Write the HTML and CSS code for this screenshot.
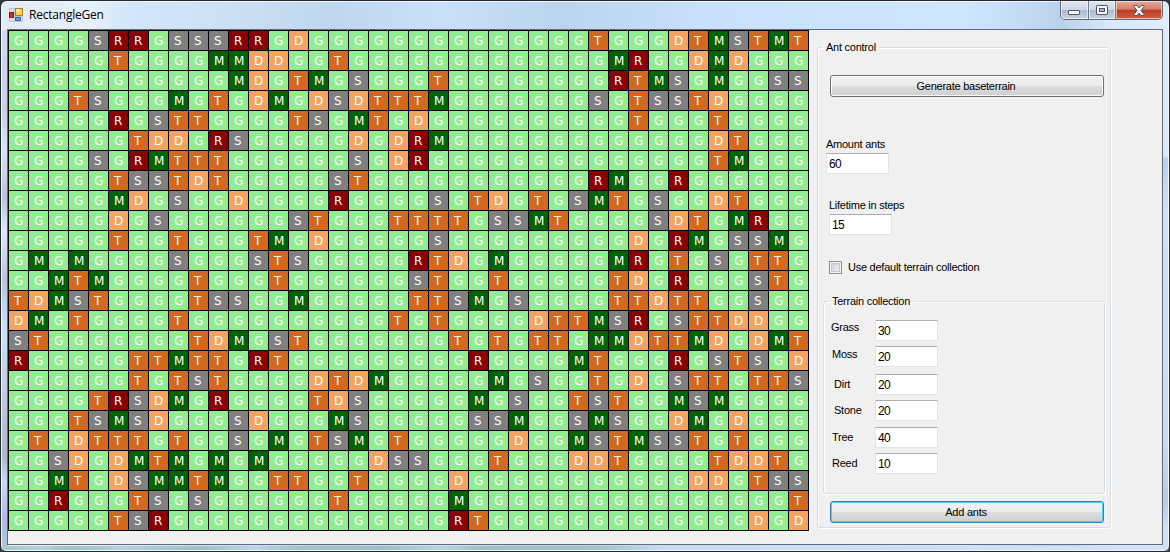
FILE: index.html
```html
<!DOCTYPE html>
<html lang="en">
<head>
<meta charset="utf-8">
<title>RectangleGen</title>
<link rel="stylesheet" href="styles.css">
</head>
<body>
<div class="window">
  <header class="titlebar">
    <svg class="app-icon" width="15" height="14" viewBox="0 0 15 14">
      <rect x="0" y="0" width="14" height="14" fill="#c3c6cc"/>
      <rect x="1" y="1" width="4" height="3" fill="#dfe1e5"/>
      <rect x="1" y="10" width="4" height="3" fill="#dfe1e5"/>
      <rect x="12" y="9" width="1" height="4" fill="#eceef1"/>
      <rect x="0.5" y="4.500" width="4" height="5" fill="#c62d1e" stroke="#8d1d14"/>
      <rect x="6.500" y="0.500" width="7" height="7" fill="#f8cf4c" stroke="#ad8420"/>
      <rect x="7" y="1" width="4" height="3" fill="#ffe793"/>
      <rect x="6.500" y="9.500" width="5" height="3" fill="#6e9cf0" stroke="#3a67c2"/>
    </svg>
    <h1 class="title">RectangleGen</h1>
    <div class="controls">
      <span class="control min">
        <svg width="13" height="6" viewBox="0 0 13 6"><rect x=".5" y=".5" width="11" height="4" rx=".5" fill="#fff" stroke="#53576a"/></svg>
      </span>
      <span class="control max">
        <svg width="12" height="10" viewBox="0 0 12 10"><rect x=".5" y=".5" width="11" height="9" rx=".5" fill="#fff" stroke="#53576a"/><rect x="3.500" y="3.500" width="5" height="3" fill="#a9b8cd" stroke="#53576a"/></svg>
      </span>
      <span class="control close">
        <svg width="12" height="11" viewBox="0 0 12 11"><path d="M1 .5H4L6 3 8 .5H11V1.500L8 5.500 11 9.500V10.500H8L6 8 4 10.500H1V9.500L4 5.500 1 1.500Z" fill="#fff" stroke="#53576a"/></svg>
      </span>
    </div>
  </header>
  <main class="client">
    <div class="terrain" id="terrain"></div>
    <fieldset class="group ant">
      <legend>Ant control</legend>
      <button class="btn generate"><span>Generate baseterrain</span></button>
      <label class="field amount"><span>Amount ants</span><input class="box" value="60"></label>
      <label class="field lifetime"><span>Lifetime in steps</span><input class="box" value="15"></label>
      <label class="check"><i class="tick"></i><span>Use default terrain collection</span></label>
      <fieldset class="group collection">
        <legend>Terrain collection</legend>
        <label class="row grass"><span>Grass</span><input class="box" value="30"></label>
        <label class="row moss"><span>Moss</span><input class="box" value="20"></label>
        <label class="row dirt"><span>Dirt</span><input class="box" value="20"></label>
        <label class="row stone"><span>Stone</span><input class="box" value="20"></label>
        <label class="row tree"><span>Tree</span><input class="box" value="40"></label>
        <label class="row reed"><span>Reed</span><input class="box" value="10"></label>
      </fieldset>
      <button class="btn add"><span>Add ants</span></button>
    </fieldset>
  </main>
</div>
<script src="terrain.js"></script>
</body>
</html>
```
FILE: terrain.js
```js
// One string per grid row, one letter per terrain cell.
const rows = [
  "GGGGSRRGSSSRR" + "GDGGGGGGGGGGGG" + "GGTGGGDTMSTMT",
  "GGGGGTGGGGMMD" + "DGGTGGGGGGGGGG" + "GGGMRGGDMDGGG",
  "GGGGGGGGGGGMD" + "GTMGSGGGTGGGGG" + "GGGRTMSGMGGSS",
  "GGGTSGGGMGTGD" + "MGDSDTTTMGGGGG" + "GGSGTSSTDGGGG",
  "GGGGGRGSTTGGG" + "GTSGMTGDGGGGGG" + "GGGGTGGGTGGGG",
  "GGGGGGTDDGRSG" + "GGGGDGDRMGGGGG" + "GGGGGGGGDTGGG",
  "GGGGSGRMTTTGG" + "GGGGSGDRGGGGGG" + "GGGGGGGGTMGGG",
  "GGGGGTSSTDTGG" + "GGGSTGGGGGGGGG" + "GGRMGGRGGGGGG",
  "GGGGGMDGSGGDG" + "GGGRGGGGSGTDGT" + "GSMTGSGGDTGGG",
  "GGGGGDGSGGGGG" + "GSTGGGTTTTGSSM" + "TGGGGSDTGMRGG",
  "GGGGGTGGTGGGT" + "MGDGGGGGSGGGGG" + "GGGGDGRMGSSMG",
  "GMGMGGGGSGGGS" + "TSGGGGGRTDGMGG" + "GGGMRGTGSGTTG",
  "GGMTMGGGGTGGG" + "TGGGGGGSTGGTGG" + "GGGTDGRGGGSTG",
  "TDMSTGGGGTSSG" + "GMGGGGGTTSMGSG" + "GGGTTDTTGGSGG",
  "DMGTGGGGTGGGG" + "GGGGGGTGTGGGGD" + "TTMSRGSTTDDGG",
  "STGGGGGGGTDMG" + "STGGGGGGGTGTGT" + "TGMMDTTMDGDMT",
  "RGGGGGTTMTTGR" + "TGGGGGGGGGRGGG" + "GMTGGGRGSTSGD",
  "GGGGGGTGTSTGG" + "GGDTDMGGGGGMGS" + "GGTGDGSTTGTTS",
  "GGGGTRSDMGRGG" + "GGTDSGGGGGMGSG" + "GTSTGGMSMGGGG",
  "GGGTSMSDGGGSD" + "GGGMSGGGGGSSMG" + "GSMSGGDMGDGGG",
  "GTGDTTTGTGGSG" + "MGTSMGTGGGGGDG" + "GMSTMSSTGTGGG",
  "GGSDGDMTMGMGM" + "GGGGGDSSGGGTGG" + "GDDTGGGGTDDTG",
  "GGMTGDSMMTMGG" + "TTGGTGGGGDGGGG" + "GGGGGGGDDGTSS",
  "GGRGGGTSGSGGG" + "GGGTGGGGGMGGGG" + "GGGGGGGGGGGGT",
  "GGGGGTSRGGGGG" + "GGGGGGGGGRTGGG" + "GGGGGGGGGGDGD"
];
document.getElementById("terrain").innerHTML = rows.map(function (row) {
  return row.split("").map(function (c) {
    return '<span class="cell ' + c.toLowerCase() + '">' + c + "</span>";
  }).join("");
}).join("");
```
FILE: styles.css
```css
* { box-sizing: border-box; }
body {
  margin: 0;
  background: #303a40;
  font: 11px/14px "Liberation Sans", Arial, sans-serif;
  letter-spacing: -0.25px;
  color: #000;
  overflow: hidden;
}
.window {
  width: 1170px;
  height: 552px;
  padding: 0 6px 6px;
  border: 1px solid #25282d;
  border-radius: 7px 7px 6px 6px;
  box-shadow: inset 0 0 0 1px #eef6ff;
  background:
    linear-gradient(90deg, #a5c9c9 0, #b4d3da 40px, #9cc2c3 70px, #b4d1e2 120px, #9dc0c6 200px, #bcd6ef 255px, #a2c6cb 290px, #9bc0c4 380px, #b9d6e8 440px, #9dc2c6 480px, #a1c5ca 600px, #c4dcf6 660px, #cfe3fb 1170px) 0 545px / 100% 5px no-repeat,
    linear-gradient(180deg, transparent 28px, #cbdcf3 30px, #c4d2e6 110px, #d6e5f8 150px, #b6c5d9 196px, #dbe9fb 230px, #b5c6dc 278px, #cfe1f7 330px, #a9b8ca 455px, #c5dbf4 480px, #aeb9e8 518px, #b3cbd4 552px) 0 0 / 7px 100% no-repeat,
    linear-gradient(180deg, transparent 28px, #d9e9fb 30px, #dceafb 155px, #b3cff0 158px, #cce2fb 210px, #c5dcf7 440px, #b6cbe6 500px, #cfe4fb 530px) right 0 / 6px 100% no-repeat,
    linear-gradient(90deg, #e2eaf5 0, #e7f1f9 90px, #d4e6f9 125px, #cbdff4 240px, #bfd7ee 330px, #c9e0f8 440px, #bad5ee 560px, #c8e0fa 700px, #d0e6ff 960px, #c4dbf3 1020px, #b9d2ea 1060px, #d8e9fb 1110px, #dfecfb 1170px);
}
.titlebar {
  height: 28px;
  display: flex;
  align-items: flex-start;
  padding-left: 2px;
}
.app-icon { margin-top: 7px; }
.title {
  flex: 1;
  margin: 5px 0 0 5px;
  font: 12px/17px "Open Sans", "Noto Sans", sans-serif;
  letter-spacing: -0.22px;
}
.controls {
  display: flex;
  width: 103px;
  height: 19px;
  border: 1px solid #646c7a;
  border-top: 0;
  border-radius: 0 0 5px 5px;
  overflow: hidden;
}
.control {
  display: flex;
  justify-content: center;
  align-items: center;
  background: linear-gradient(#dce5ef 0, #ccd7e4 48%, #a9b8cb 50%, #c5d5e8 100%);
  box-shadow: inset 0 0 0 1px rgba(255, 255, 255, .55);
}
.min { width: 28px; border-right: 1px solid #717b8b; padding-top: 5px; }
.max { width: 27px; border-right: 1px solid #717b8b; }
.close { flex: 1; background: linear-gradient(#e5a99b 0, #d67d6a 46%, #b93b22 50%, #d0604b 100%); }
.client {
  height: 516px;
  width: 1156px;
  display: flex;
  align-items: flex-start;
  background: #f0f0f0;
  border: 1px solid #626b77;
}
.terrain {
  width: 801px;
  height: 501px;
  flex: none;
  display: grid;
  grid-template-columns: repeat(40, 19px);
  grid-auto-rows: 19px;
  gap: 1px;
  padding: 1px;
  background: #000;
  font: 12px/19px "DejaVu Sans", Verdana, sans-serif;
  letter-spacing: 0;
  color: #fff;
}
.cell { padding-left: 5px; padding-top: 1px; height: 19px; overflow: hidden; }
.g { background: #90ee90; }
.s { background: #808080; }
.r { background: #8b0000; }
.t { background: #d2691e; }
.m { background: #006400; }
.d { background: #f4a460; }
.group {
  min-width: 0;
  margin: 0;
  padding: 0;
  border: 1px solid #d5dfe5;
  border-radius: 3px;
  box-shadow: inset 1px 1px 0 #fff, 1px 1px 0 #fff;
}
legend { height: 14px; padding: 0 3px; margin-left: 5px; }
.ant { width: 294px; height: 488px; margin: 10px 0 0 8px; }
.btn {
  display: flex;
  align-items: center;
  justify-content: center;
  width: 274px;
  height: 22px;
  margin-left: 12px;
  padding: 0 2px 0 0;
  border: 1px solid #707070;
  border-radius: 3px;
  background: linear-gradient(#f2f2f2 0, #ebebeb 48%, #dddddd 50%, #cfcfcf 100%);
  box-shadow: inset 0 0 0 1px #fafafa;
  font: inherit;
  letter-spacing: inherit;
  color: #000;
}
.generate { margin-top: 21px; }
.field { display: flex; flex-direction: column; width: 140px; }
.box {
  width: 63px;
  height: 21px;
  padding: 0 2px;
  border: 1px solid #e2e3ea;
  border-top-color: #abadb3;
  border-radius: 1px;
  background: #fff;
  font: 12px/19px "Liberation Sans", Arial, sans-serif;
  letter-spacing: -0.7px;
  color: #000;
}
.amount { margin: 40px 0 0 8px; }
.amount .box { margin-top: 2px; }
.lifetime { margin: 24px 0 0 11px; }
.lifetime .box { margin-top: 2px; }
.check { display: flex; align-items: center; margin: 25px 0 0 11px; }
.tick {
  width: 13px;
  height: 13px;
  margin-right: 6px;
  border: 1px solid #8e8f8f;
  background: linear-gradient(135deg, #c4c9d1, #f6f6f6);
  box-shadow: inset 0 0 0 1px #f4f4f4, inset 0 0 0 2px #c3c8cf;
}
.collection { width: 282px; height: 200px; margin: 20px 0 0 5px; }
.row { display: flex; align-items: flex-start; margin-left: 8px; height: 21px; }
.row span { width: 43px; }
.grass { margin-top: 12px; margin-left: 7px; }
.grass span { width: 44px; }
.moss { margin-top: 5px; }
.moss span { padding-top: 1px; }
.dirt { margin-top: 7px; }
.stone { margin-top: 5px; }
.dirt span, .stone span, .tree span { padding-top: 3px; }
.reed span { padding-top: 3px; }
.dirt, .stone { margin-left: 10px; }
.dirt span, .stone span { width: 41px; }
.tree { margin-top: 6px; }
.reed { margin-top: 5px; }
.add {
  margin-top: 7px;
  border-color: #3c7fb1;
  box-shadow: inset 0 0 0 1px #46d0f4;
}
```
